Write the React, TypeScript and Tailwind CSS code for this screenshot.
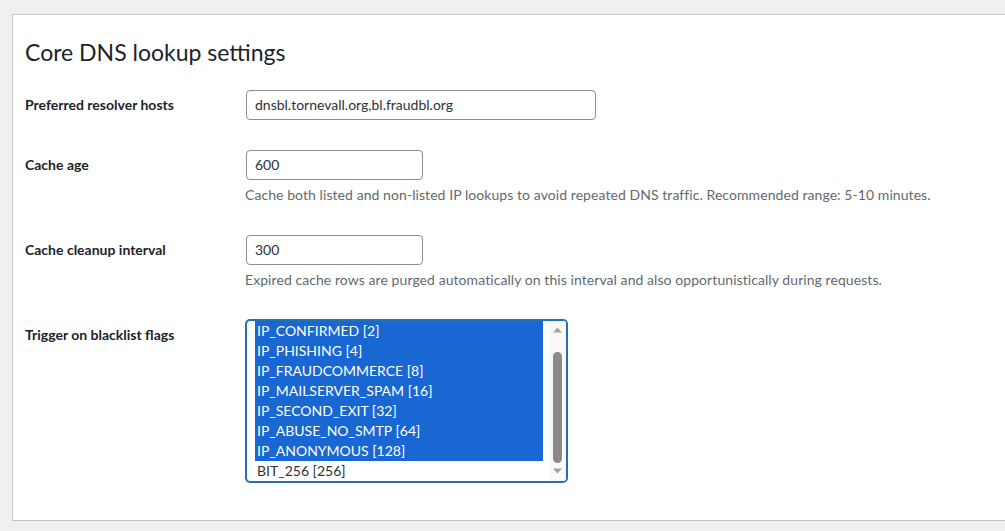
const flags = [
  'IP_CONFIRMED [2]',
  'IP_PHISHING [4]',
  'IP_FRAUDCOMMERCE [8]',
  'IP_MAILSERVER_SPAM [16]',
  'IP_SECOND_EXIT [32]',
  'IP_ABUSE_NO_SMTP [64]',
  'IP_ANONYMOUS [128]',
];

const Label = ({ children }: { children: React.ReactNode }) => (
  <div className="w-[221px] shrink-0 text-[14px] font-bold text-[#1d2327] leading-[30px]">{children}</div>
);

const TextInput = ({ value, width }: { value: string; width: string }) => (
  <div className={`${width} h-[30px] rounded-[4px] border border-[#8c8f94] bg-white px-2 text-[14px] leading-[28px] text-[#2c3338]`}>
    {value}
  </div>
);

export default function App() {
  return (
    <div className="h-screen w-full overflow-hidden bg-[#f0f0f1] pl-[12px] pt-[14px]" style={{ fontFamily: 'Lato, "Noto Sans", sans-serif' }}>
      <div className="w-[1010px] h-[507px] border border-[#c3c4c7] bg-white pl-[12px] pt-[22px]">
        <h2 className="text-[23px] leading-[30px] text-[#1d2327]">Core DNS lookup settings</h2>

        {/* Preferred resolver hosts */}
        <div className="mt-[23px] flex">
          <Label>Preferred resolver hosts</Label>
          <TextInput value="dnsbl.tornevall.org,bl.fraudbl.org" width="w-[350px]" />
        </div>

        {/* Cache age */}
        <div className="mt-[30px] flex">
          <Label>Cache age</Label>
          <div className="flex flex-col">
            <TextInput value="600" width="w-[177px]" />
            <p className="-ml-px mt-[5px] text-[14px] tracking-[0.07px] leading-[20px] text-[#646970]">
              Cache both listed and non-listed IP lookups to avoid repeated DNS traffic. Recommended range: 5-10 minutes.
            </p>
          </div>
        </div>

        {/* Cache cleanup interval */}
        <div className="mt-[30px] flex">
          <Label>Cache cleanup interval</Label>
          <div className="flex flex-col">
            <TextInput value="300" width="w-[177px]" />
            <p className="-ml-px mt-[5px] text-[14px] tracking-[0.07px] leading-[20px] text-[#646970]">
              Expired cache rows are purged automatically on this interval and also opportunistically during requests.
            </p>
          </div>
        </div>

        {/* Trigger on blacklist flags */}
        <div className="mt-[29px] flex">
          <div className="w-[220px] shrink-0 pt-[1px] text-[14px] font-bold text-[#1d2327] leading-[30px]">Trigger on blacklist flags</div>
          <div className="m-[1px] flex h-[162px] w-[321px] overflow-hidden rounded-[4px] border border-[#2271b1] bg-white shadow-[0_0_0_1px_#2271b1]">
            <div className="flex-1 pl-2 pr-[6px]">
              {flags.map((f) => (
                <div key={f} className="h-[20px] bg-[#1967d2] pl-[2px] text-[14px] leading-[20px] text-white">
                  {f}
                </div>
              ))}
              <div className="h-[20px] pl-[2px] text-[14px] leading-[20px] text-[#2c3338]">BIT_256 [256]</div>
            </div>
            <div className="relative w-[17px] bg-[#f9f9f9]">
              <svg className="absolute left-[4px] top-[6px]" width="9" height="6" viewBox="0 0 9 6">
                <path d="M0 5.5 L4.5 0.5 L9 5.5 Z" fill="#a3a3a3" />
              </svg>
              <div className="absolute left-[4px] top-[31px] h-[111px] w-[9px] rounded-full bg-[#8a8a8a]" />
              <svg className="absolute left-[4px] top-[147px]" width="9" height="6" viewBox="0 0 9 6">
                <path d="M0 0.5 L4.5 5.5 L9 0.5 Z" fill="#a3a3a3" />
              </svg>
            </div>
          </div>
        </div>
      </div>
    </div>
  );
}
